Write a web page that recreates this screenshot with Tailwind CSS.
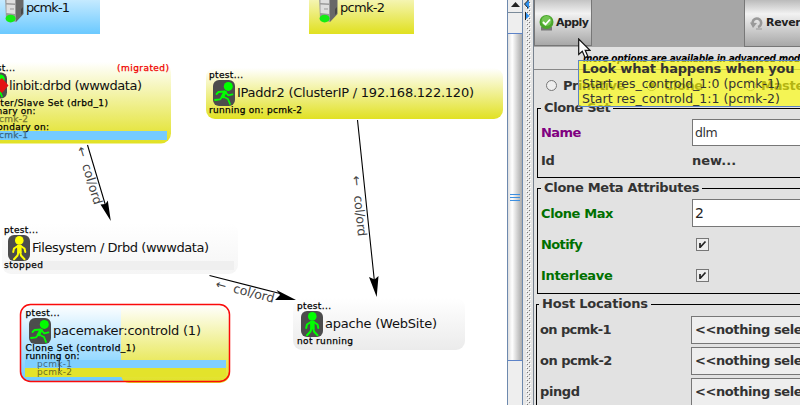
<!DOCTYPE html>
<html lang="en">
<head>
<meta charset="utf-8">
<title>Cluster graph</title>
<script src="https://cdn.jsdelivr.net/npm/@tailwindcss/browser@4"></script>
</head>
<body class="w-[800px] h-[405px] overflow-hidden bg-white font-['DejaVu_Sans',sans-serif] text-[#333]">
<div class="relative flex w-[800px] h-[405px] overflow-hidden">

  <!-- Graph canvas -->
  <svg class="block w-[507px] h-[405px] shrink-0" viewBox="0 0 507 405" fill="#111">
    <defs>
      <linearGradient id="yel" x1="0" y1="0" x2="0" y2="1"><stop offset="0" stop-color="#fff"/><stop offset="1" stop-color="#e1e123"/></linearGradient>
      <linearGradient id="blu" x1="0" y1="0" x2="0" y2="1"><stop offset="0" stop-color="#fff"/><stop offset="1" stop-color="#6dcaff"/></linearGradient>
      <linearGradient id="gry" x1="0" y1="0" x2="0" y2="1"><stop offset="0" stop-color="#fff"/><stop offset="1" stop-color="#ebebeb"/></linearGradient>
      <linearGradient id="hostY" gradientUnits="userSpaceOnUse" x1="0" y1="-18" x2="0" y2="33"><stop offset="0" stop-color="#fff"/><stop offset="1" stop-color="#e1e123"/></linearGradient>
      <linearGradient id="hostB" gradientUnits="userSpaceOnUse" x1="0" y1="-22" x2="0" y2="33"><stop offset="0" stop-color="#fff"/><stop offset="1" stop-color="#6dcaff"/></linearGradient>
      <symbol id="run" viewBox="0 0 22 26" overflow="visible">
        <rect width="22" height="26" rx="6" fill="#4c4c4c"/>
        <circle cx="15.300" cy="6.400" r="4.500" fill="#0f0"/>
        <path d="M12 11.500L5.500 12L3.500 14M12.500 12L15 15.300L19.500 14.300M9.500 16.500L7 19.300L2 20M10 16.500L15 19L17 24" fill="none" stroke="#0f0" stroke-width="1.800" stroke-linecap="round" stroke-linejoin="round"/>
        <path d="M11 10.500l3 1-3.500 7-3-1.500z" fill="#0f0"/>
      </symbol>
      <symbol id="stand" viewBox="0 0 22 26" overflow="visible">
        <rect width="22" height="26" rx="6" fill="#4c4c4c"/>
        <g fill="currentColor" stroke="currentColor">
          <circle cx="11.300" cy="5.400" r="4.300" stroke="none"/>
          <path d="M10.500 10.500L6 13.500L5.200 17M12 10.500L16.500 13.500L17.300 17M10.500 17L9.500 20.500L6 24.300M12.200 17L13 20.500L16.500 24.300" fill="none" stroke-width="2" stroke-linecap="round" stroke-linejoin="round"/>
          <path d="M9 10h4.600v8H9.200z" stroke="none"/>
        </g>
      </symbol>
      <symbol id="server" viewBox="0 0 20 24" overflow="visible">
        <path d="M0-4H11V22L1 19z" fill="#9a9a9a"/>
        <path d="M11-4H18.500V14L11 22z" fill="#686868"/>
        <path d="M16 9l2-2v6l-2 2z" fill="#484848"/>
        <path d="M1.500-3H10V3.500L1.500 3zM1.500 4.500L10 5V14L1.500 13z" fill="#dedede"/>
        <path d="M5 9h4" stroke="#999" stroke-width="1"/>
        <ellipse cx="5.600" cy="18.600" rx="5" ry="3.900" fill="#14ec14"/>
      </symbol>
    </defs>

    <!-- Hosts -->
    <rect x="-20" y="-18" width="120" height="52" fill="url(#hostB)"/>
    <use href="#server" x="5" y="0" width="20" height="24"/>
    <text x="26" y="12" font-size="13" textLength="44">pcmk-1</text>
    <rect x="309" y="-18" width="105" height="52" fill="url(#hostY)"/>
    <use href="#server" x="319" y="0" width="20" height="24"/>
    <text x="340" y="12" font-size="13" textLength="45">pcmk-2</text>

    <!-- Edges -->
    <g stroke="#000" stroke-width="1.100"><path d="M87.500 145L106 207M357.500 120L374.500 282M209.500 275.500L280 293.500"/></g>
    <path d="M110.800 221L100.500 204.500L105.500 204L107.800 200.500z" fill="#000"/>
    <path d="M376.700 297L369 277L374.500 279.500L378.500 276z" fill="#000"/>
    <path d="M296 300L275 300L280 295L276.500 290z" fill="#000"/>
    <g fill="#444" font-size="12.500">
      <g transform="translate(77,149) rotate(73)"><text x="-1">←</text><text x="17" textLength="42">col/ord</text></g>
      <g transform="translate(352,177) rotate(84.200)"><text x="-1">←</text><text x="19" textLength="41">col/ord</text></g>
      <g transform="translate(216,288) rotate(14.500)"><text x="-1">←</text><text x="17" textLength="42">col/ord</text></g>
    </g>

    <!-- linbit:drbd -->
    <rect x="-40" y="62" width="211" height="81.500" rx="10" fill="url(#yel)"/>
    <rect x="-30" y="131" width="197" height="9" fill="#74cbff"/>
    <g font-size="9" stroke-width=".25">
      <text x="-19" y="71" fill="#000" stroke="#000" textLength="34">ptest...</text>
      <text x="117" y="71" fill="#f00000" stroke="#f00000" textLength="52">(migrated)</text>
      <text x="-19" y="106" fill="#000" stroke="#000" textLength="127">Master/Slave Set (drbd_1)</text>
      <text x="-19" y="114" fill="#000" stroke="#000" textLength="54.500">primary on:</text>
      <text x="-7" y="122" fill="#777733" stroke="#777733" textLength="35">pcmk-2</text>
      <text x="-19" y="130" fill="#000" stroke="#000" textLength="68">secondary on:</text>
      <text x="-7" y="138" fill="#3a6680" stroke="#3a6680" textLength="35">pcmk-1</text>
    </g>
    <use href="#run" x="-15" y="72.500" width="22" height="26"/>
    <path d="M-8 85.500L2 78L8.500 85.500L2 93z" fill="#e31414"/>
    <text x="9" y="90" font-size="13" textLength="133">linbit:drbd (wwwdata)</text>

    <!-- IPaddr2 -->
    <rect x="206" y="68" width="297" height="51" rx="9" fill="url(#yel)"/>
    <g font-size="9" fill="#000" stroke="#000" stroke-width=".25">
      <text x="209" y="78" textLength="34">ptest...</text>
      <text x="209" y="113" textLength="93">running on: pcmk-2</text>
    </g>
    <use href="#run" x="213" y="80" width="22" height="26"/>
    <text x="237" y="97" font-size="13" textLength="237">IPaddr2 (ClusterIP / 192.168.122.120)</text>

    <!-- Filesystem -->
    <rect x="2" y="223" width="236" height="51" rx="9" fill="url(#gry)" opacity=".5"/>
    <rect x="5" y="261" width="229" height="9" fill="#efefef"/>
    <g font-size="9" fill="#000" stroke="#000" stroke-width=".25">
      <text x="4" y="233" textLength="34">ptest...</text>
      <text x="4" y="268" textLength="39">stopped</text>
    </g>
    <use href="#stand" x="8" y="235" width="22" height="26" color="#ff0"/>
    <text x="32" y="252" font-size="13" textLength="177">Filesystem / Drbd (wwwdata)</text>

    <!-- apache -->
    <rect x="293" y="298" width="172" height="52" rx="9" fill="url(#gry)"/>
    <g font-size="9" fill="#000" stroke="#000" stroke-width=".25">
      <text x="297" y="309" textLength="34">ptest...</text>
      <text x="297" y="344" textLength="56">not running</text>
    </g>
    <use href="#stand" x="301" y="311" width="22" height="26" color="#0f0"/>
    <text x="325" y="328" font-size="13" textLength="112">apache (WebSite)</text>

    <!-- pacemaker:controld -->
    <rect x="20.500" y="304.500" width="209" height="77" rx="10" fill="url(#blu)"/>
    <path d="M121 304.500H220a10 10 0 0 1 10 10V373a10 10 0 0 1-10 10H129q-6 0-8-7z" fill="url(#yel)"/>
    <rect x="25" y="360" width="201" height="8" fill="#7fcfff"/>
    <rect x="25" y="368" width="201" height="9" fill="#e3e32b"/>
    <rect x="20.500" y="304.500" width="209" height="77" rx="10" fill="none" stroke="#fa0a0a" stroke-width="1.500"/>
    <use href="#run" x="29" y="318" width="22" height="26"/>
    <text x="53" y="335" font-size="13" textLength="148">pacemaker:controld (1)</text>
    <g font-size="9" fill="#000" stroke="#000" stroke-width=".25">
      <text x="25.500" y="316" textLength="34">ptest...</text>
      <text x="25.500" y="351" textLength="110">Clone Set (controld_1)</text>
      <text x="25.500" y="359" textLength="54">running on:</text>
    </g>
    <text x="37" y="367" font-size="9" fill="#426a80" textLength="35">pcmk-1</text>
    <text x="37" y="375" font-size="9" fill="#6e6e1e" textLength="35">pcmk-2</text>
    <path d="M59.500 360v11" stroke="#333" stroke-width=".8"/>
  </svg>

  <!-- Scrollbar -->
  <div class="flex flex-col w-[16px] shrink-0 h-full border-l border-r border-[#6d89ae] bg-[#eee]">
    <div class="h-[13px] shrink-0 border-b border-[#7a8a99] flex justify-center pt-[2px]">
      <svg class="w-[9px] h-[5px]" viewBox="0 0 9 5"><path d="M4.500 0L9 5H0z" fill="#222"/></svg>
    </div>
    <div class="h-[20px] shrink-0"></div>
    <div class="h-[328px] shrink-0 border-y border-[#5d83c8] bg-linear-to-r from-[#dfdfdf] via-white via-30% to-[#a9a9a9] flex flex-col items-center justify-center gap-[2px]">
      <i class="block w-[10px] h-px bg-[#3d8fe0]"></i><i class="block w-[10px] h-px bg-[#3d8fe0]"></i><i class="block w-[10px] h-px bg-[#3d8fe0]"></i>
    </div>
  </div>

  <!-- Split divider -->
  <svg class="block w-[11px] h-[405px] shrink-0">
    <defs><pattern id="dots" width="4" height="4" patternUnits="userSpaceOnUse"><path d="M0 0h1v1H0zM2 2h1v1H2z" fill="#777"/><path d="M1 1h1v1H1zM3 3h1v1H3z" fill="#fff"/></pattern></defs>
    <rect width="11" height="405" fill="#e6e6e6"/>
    <rect x="3" width="5" height="405" fill="url(#dots)"/>
    <path d="M6 0V9L1.500 4z" fill="#2b8fef"/><path d="M5.500 0L1.500 4L5 8" stroke="#222" fill="none"/>
    <path d="M2 11.500V20L6.500 16z" fill="#2b8fef"/><path d="M2.500 12V20" stroke="#222"/>
    <rect x="10" width="1" height="405" fill="#77828f"/>
  </svg>

  <!-- Configuration panel -->
  <div class="flex flex-col w-[266px] h-full shrink-0 bg-[#e2e2e2] overflow-hidden text-[13px] font-bold whitespace-nowrap">
    <div class="flex h-[47px] shrink-0 justify-between bg-[#a6a6a6]">
      <div class="flex items-center w-[58px] h-[46px] pl-[4px] gap-[2px] border border-t-0 border-[#777] bg-linear-to-b from-[#c4c4c4] via-[#f2f2f2] via-30% to-[#a8a8a8] text-[11px] text-[#222]">
        <svg class="w-[15px] h-[16px] shrink-0" viewBox="0 0 15 16"><rect x="2" y="12" width="11" height="3.500" fill="#777"/><circle cx="7.500" cy="7" r="7" fill="#4aa62c"/><circle cx="7.500" cy="6" r="5" fill="#72c552"/><path d="M4 7l2.500 2.500L11 4.500" fill="none" stroke="#fff" stroke-width="1.800"/></svg>
        <span class="pt-[2px] tracking-[-0.6px]">Apply</span>
      </div>
      <div class="flex items-center w-[56px] h-[47px] pl-[5px] gap-[2px] border-l border-b border-[#777] bg-linear-to-b from-[#bbb] via-[#f2f2f2] via-30% to-[#a8a8a8] text-[11px] text-[#222]">
        <svg class="w-[14px] h-[14px] shrink-0" viewBox="0 0 14 14"><path d="M3.500 9.500A4.300 4.300 0 1 1 8 11" fill="none" stroke="#999" stroke-width="2.600"/><path d="M0 6.500L7 7L3 12z" fill="#999"/><path d="M6 13h6" stroke="#aaa" stroke-width="1.500"/></svg>
        <span class="tracking-[-0.3px]">Revert</span>
      </div>
    </div>
    <div class="h-[22px] shrink-0 pl-[49px] pt-[5px] text-[10px] leading-[14px] italic text-black font-['DejaVu_Sans_Condensed','DejaVu_Sans',sans-serif] tracking-[-0.2px]">more options are available in advanced mode</div>
    <div class="flex items-center h-[32px] shrink-0 border-t border-[#888] pl-[12px] tracking-[-0.3px]">
      <i class="block size-[11px] shrink-0 rounded-full border border-[#777] bg-[#eee]"></i><span class="ml-[6px] w-[83px] shrink-0 tracking-[-0.5px]">Primitive</span>
      <i class="block size-[11px] shrink-0 rounded-full border border-[#777] bg-radial from-[#333] from-45% to-[#eee] to-50%"></i><span class="ml-[7px] w-[81px] shrink-0 tracking-[-0.5px]">Clone</span>
      <i class="block size-[11px] shrink-0 rounded-full border border-[#777] bg-[#eee]"></i><span class="ml-[5px] shrink-0">Master</span>
    </div>

    <fieldset class="h-[77px] shrink-0 ml-[3px] -mr-[4px] border border-black">
      <legend class="ml-[3px] px-[3px] h-[14px] leading-[14px] tracking-[-0.4px]">Clone Set</legend>
      <div class="flex items-center h-[27px] mt-[4px]"><span class="w-[154px] pl-[3px] text-[#800080] tracking-[-0.6px]">Name</span><span class="flex-1 h-[27px] border border-[#777] bg-white pl-[2px] leading-[25px] font-normal text-[12.500px] tracking-[-0.4px]">dlm</span></div>
      <div class="flex items-center h-[30px]"><span class="w-[154px] pl-[3px] tracking-[-0.4px]">Id</span><span>new...</span></div>
    </fieldset>

    <fieldset class="h-[113px] shrink-0 mt-[3px] ml-[3px] -mr-[4px] border border-black">
      <legend class="ml-[3px] px-[3px] h-[14px] leading-[14px] tracking-[-0.3px]">Clone Meta Attributes</legend>
      <div class="flex items-center h-[28px] mt-[4px] text-[#007000]"><span class="w-[154px] pl-[3px] pt-[1px] tracking-[-0.4px]">Clone Max</span><span class="flex-1 h-[28px] border border-[#777] bg-white pl-[2px] leading-[26px] text-[14px] font-normal text-[#222]">2</span></div>
      <div class="flex items-center h-[31px] mt-[2px] text-[#007000]"><span class="w-[158px] pl-[3px] tracking-[-0.6px]">Notify</span>
        <svg class="size-[13px]" viewBox="0 0 13 13"><rect x=".5" y=".5" width="12" height="12" fill="#eee" stroke="#777"/><path d="M4 5v5M4 9.500L9.500 3.500" fill="none" stroke="#222" stroke-width="1.700"/></svg></div>
      <div class="flex items-center h-[31px] text-[#007000]"><span class="w-[158px] pl-[3px] tracking-[-0.35px]">Interleave</span>
        <svg class="size-[13px]" viewBox="0 0 13 13"><rect x=".5" y=".5" width="12" height="12" fill="#eee" stroke="#777"/><path d="M4 5v5M4 9.500L9.500 3.500" fill="none" stroke="#222" stroke-width="1.700"/></svg></div>
    </fieldset>

    <fieldset class="h-[130px] shrink-0 mt-[3px] ml-[2px] -mr-[4px] border border-black">
      <legend class="ml-[2px] px-[3px] h-[14px] leading-[14px] tracking-[-0.2px]">Host Locations</legend>
      <div class="flex items-center h-[28px] mt-[5px]"><span class="w-[154px] pl-[3px] tracking-[-0.6px]">on pcmk-1</span><span class="flex-1 h-[28px] border border-[#777] bg-[#eee] pl-[3px] leading-[25px] tracking-[-0.4px]">&lt;&lt;nothing selected&gt;&gt;</span></div>
      <div class="flex items-center h-[28px] mt-[3px]"><span class="w-[154px] pl-[3px] tracking-[-0.5px]">on pcmk-2</span><span class="flex-1 h-[28px] border border-[#777] bg-[#eee] pl-[3px] leading-[25px] tracking-[-0.4px]">&lt;&lt;nothing selected&gt;&gt;</span></div>
      <div class="flex items-center h-[28px] mt-[3px]"><span class="w-[154px] pl-[3px] tracking-[-0.4px]">pingd</span><span class="flex-1 h-[28px] border border-[#777] bg-[#eee] pl-[3px] leading-[25px] tracking-[-0.4px]">&lt;&lt;nothing selected&gt;&gt;</span></div>
    </fieldset>
  </div>

  <!-- Tooltip -->
  <div class="absolute left-[578px] top-[60px] w-[240px] h-[47px] border border-[#5c83c4] bg-[#ffff00]/63 pl-[3px] text-[12.500px] leading-[15px] whitespace-nowrap">
    <div class="font-bold text-[13px] tracking-[-0.2px]">Look what happens when you</div>
    <div>Start res_controld_1:0 (pcmk-1)</div>
    <div>Start res_controld_1:1 (pcmk-2)</div>
  </div>

  <!-- Pointer -->
  <svg class="absolute left-[578px] top-[38px] w-[13px] h-[21px]" viewBox="0 0 13 21"><path d="M.7 1V16.500L4.300 13.200L7 19.500L9.800 18.300L7.200 12.300H12z" fill="#fff" stroke="#111" stroke-width="1.200"/></svg>
</div>
</body>
</html>
